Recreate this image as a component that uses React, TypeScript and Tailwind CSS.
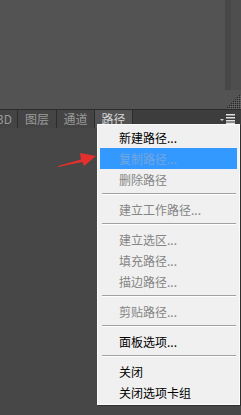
import React from "react";

type Item = { label: string; enabled?: boolean; active?: boolean } | "sep";

const items: Item[] = [
  { label: "新建路径...", enabled: true },
  { label: "复制路径...", active: true },
  { label: "删除路径" },
  "sep",
  { label: "建立工作路径..." },
  "sep",
  { label: "建立选区..." },
  { label: "填充路径..." },
  { label: "描边路径..." },
  "sep",
  { label: "剪贴路径..." },
  "sep",
  { label: "面板选项...", enabled: true },
  "sep",
  { label: "关闭", enabled: true },
  { label: "关闭选项卡组", enabled: true },
];

function Grip() {
  const dots: React.ReactElement[] = [];
  for (let y = 0; y < 14; y += 2) {
    for (let x = 0; x < 16; x += 2) {
      if (x + y >= 14) {
        dots.push(<rect key={`${x}-${y}`} x={x} y={y} width={1} height={1} fill="#262626" />);
        dots.push(<rect key={`l${x}-${y}`} x={x + 1} y={y + 1} width={1} height={1} fill="#6a6a6a" />);
      }
    }
  }
  return (
    <svg width="16" height="14" viewBox="0 0 16 14" className="block">
      {dots}
    </svg>
  );
}

function MenuIcon() {
  return (
    <svg width="16" height="10" viewBox="0 0 16 10" className="block">
      <polygon points="0,5 4,5 2,7" fill="#cfcfcf" />
      <rect x="6" y="0" width="9" height="1.5" fill="#e0e0e0" />
      <rect x="6" y="3" width="9" height="1.5" fill="#e0e0e0" />
      <rect x="6" y="6" width="9" height="1.5" fill="#e0e0e0" />
      <rect x="6" y="8.5" width="9" height="1.5" fill="#e0e0e0" />
    </svg>
  );
}

export default function App() {
  return (
    <div
      className="relative w-[241px] h-[415px] overflow-hidden flex flex-col bg-[#474747]"
      style={{ fontFamily: '"Noto Sans CJK SC", "Noto Sans", sans-serif' }}
    >
      {/* top canvas area */}
      <div className="h-[109px] flex bg-[#535353]">
        <div className="flex-1" />
        <div className="w-[16px] flex flex-col">
          <div className="h-[90px] flex">
            <div className="w-[6px] bg-[#474747]" />
            <div className="flex-1 bg-[#4e4e4e]" />
          </div>
          <div className="flex-1 flex items-end">
            <Grip />
          </div>
        </div>
      </div>
      <div className="h-px bg-[#2c2c2c]" />
      {/* tab bar */}
      <div className="h-[18px] flex bg-[#3d3d3d] text-[12px] leading-[18px]">
        <div className="w-[18px] overflow-hidden flex justify-end pr-[5px] bg-[#444444] text-[#9a9a9a] border-r border-[#2c2c2c] whitespace-nowrap">
          3D
        </div>
        <div className="w-[39px] flex justify-center bg-[#444444] text-[#9a9a9a] border-r border-[#2c2c2c]">
          图层
        </div>
        <div className="w-[38px] flex justify-center bg-[#444444] text-[#9a9a9a] border-r border-[#2c2c2c]">
          通道
        </div>
        <div className="w-[38px] flex justify-center bg-[#535353] text-[#d6d6d6] border-r border-[#2c2c2c]">
          路径
        </div>
        <div className="flex-1 flex justify-end items-center pr-[5px]">
          <MenuIcon />
        </div>
      </div>
      <div className="flex-1" />

      {/* red arrow */}
      <svg
        className="absolute left-[56px] top-[150px]"
        width="42"
        height="20"
        viewBox="0 0 42 20"
      >
        <polygon
          points="2,16 25,9.5 24,3 40,6 28,16 26.5,12 2,17"
          fill="#e5302d"
        />
      </svg>

      {/* context menu */}
      <div className="absolute left-[97px] top-[124px] w-[143px] bg-[#f0f0f0] border border-[#fbfbfb] pt-[2px] pb-[1px] px-[2px] shadow-[1px_1px_0_#2e2e2e] text-[12px]">
        {items.map((it, i) =>
          it === "sep" ? (
            <div key={i} className="h-[9px] pt-[3px] pl-[2px] pr-px">
              <div className="h-px bg-[#a0a0a0]" />
              <div className="h-px bg-white" />
            </div>
          ) : (
            <div
              key={i}
              className={
                "h-[21px] leading-[21px] pl-[19px] whitespace-nowrap " +
                (it.active
                  ? "bg-[#3399ff] text-[#74a6de]"
                  : it.enabled
                  ? "text-black"
                  : "text-[#858585]")
              }
            >
              {it.label}
            </div>
          )
        )}
      </div>
    </div>
  );
}
